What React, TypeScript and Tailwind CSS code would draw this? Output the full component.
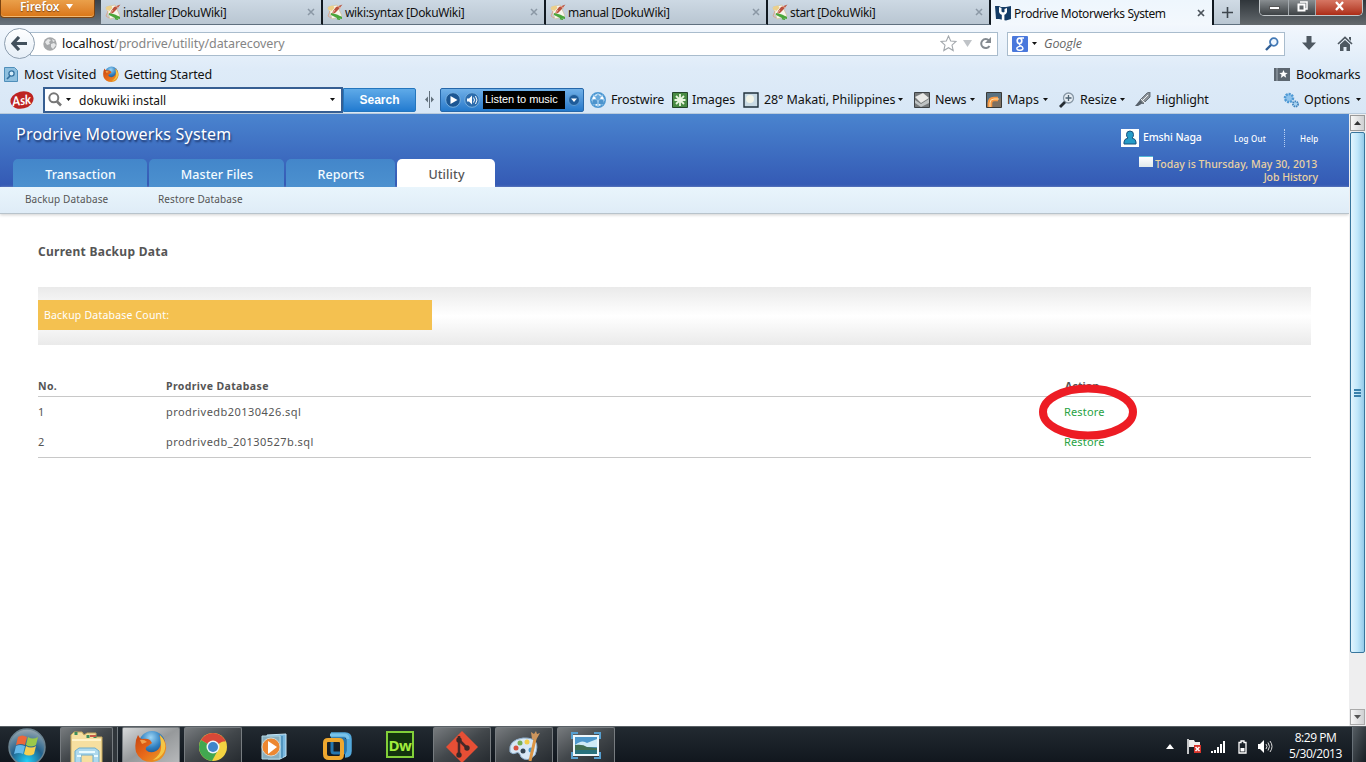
import React from "react";

const ui = "font-['Noto_Sans','Open_Sans',sans-serif]";

type TextProps = { children: React.ReactNode; className?: string };

function Label({ children, className = "" }: TextProps) {
  return <span className={`block shrink-0 whitespace-nowrap ${className}`}>{children}</span>;
}

function Caret({ className = "" }: { className?: string }) {
  return (
    <svg className={`block shrink-0 ${className}`} width="5" height="3" viewBox="0 0 5 3">
      <path d="M0 0h5L2.5 3z" fill="#111" />
    </svg>
  );
}

function WikiIcon() {
  return (
    <svg width="16" height="16" viewBox="0 0 16 16" className="block shrink-0">
      <path d="M1 3l9-2 5 11-10 3z" fill="#f8f6ec" stroke="#cfc29a" strokeWidth=".7" />
      <path d="M.5 5q2-4 6-3l1 2-3 3z" fill="#ecd08a" />
      <path d="M15.500 .5L9 3 6 7l-1 3 3-1 3-3z" fill="#b9503c" />
      <path d="M10 2l4 2M8 6L5 10" stroke="#e9b29c" strokeWidth="1" />
      <path d="M4 9l6 1.500 5 2.500v2l-5-1-6-3z" fill="#4aa73b" />
      <path d="M10 14.500l3 1" stroke="#4aa73b" strokeWidth="1.500" />
      <path d="M3 7l-2 5 3 2" fill="none" stroke="#d9a993" strokeWidth="1" />
    </svg>
  );
}

function BrowserTab({ title, wide, titleClass }: { title: string; wide?: boolean; titleClass: string }) {
  return (
    <div
      className={`flex h-[25px] shrink-0 items-center border-r-2 border-b border-r-[#101820] border-b-[#5f707f] bg-gradient-to-b from-[#cdd9e4] to-[#b9c6d2] pl-[4px] ${wide ? "w-[223px]" : "w-[222px]"}`}
    >
      <WikiIcon />
      <Label className={`ml-[2px] flex-1 pt-[2px] text-[12px] text-[#111] ${titleClass}`}>{title}</Label>
      <svg width="8" height="8" viewBox="0 0 8 8" className="mr-[6px] block">
        <path d="M1 1l6 6M7 1L1 7" stroke="#8b98a5" strokeWidth="1.5" />
      </svg>
    </div>
  );
}

function TabStrip() {
  return (
    <div className="flex h-[25px] w-full items-start overflow-hidden bg-gradient-to-b from-[#39424a] to-[#69737c]">
      <div className="mr-[6px] flex h-[18px] w-[95px] items-start rounded-b-[4px] border-x border-b border-[#7b4310] bg-gradient-to-b from-[#eaa04a] to-[#d97513] pl-[19px] shadow-[inset_0_-1px_0_#f1b873]">
        <Label className="w-[46px] text-[12px] leading-[14px] font-semibold tracking-[-0.1px] text-white [text-shadow:0_1px_1px_#7b4310]">Firefox</Label>
        <svg width="7" height="5" viewBox="0 0 7 5" className="mt-[4px] block">
          <path d="M0 0h7L3.5 5z" fill="#fff" />
        </svg>
      </div>
      <BrowserTab title="installer [DokuWiki]" titleClass="tracking-[-0.33px]" />
      <BrowserTab title="wiki:syntax [DokuWiki]" titleClass="tracking-[-0.33px]" wide />
      <BrowserTab title="manual [DokuWiki]" titleClass="tracking-[-0.33px]" />
      <BrowserTab title="start [DokuWiki]" titleClass="tracking-[-0.33px]" wide />
      <div className="flex h-[25px] w-[223px] shrink-0 items-center border-r-2 border-[#101820] bg-gradient-to-b from-[#eef6fd] to-[#f3f8fd] pl-[4px]">
        <svg width="16" height="16" viewBox="0 0 16 16" className="block">
          <path d="M0 1h4l2 1h5l5-1v13l-5 1.500L4 14H1z" fill="#143c66" />
          <path d="M4 2v5q1 3 4 3t4-3V3l-2.500 1v3L8 7.500 6.500 6.500V3z" fill="#fff" />
          <path d="M6.800 9h2.600v6.500H6.800z" fill="#fff" />
        </svg>
        <Label className="ml-[3px] flex-1 pt-[2px] text-[12px] tracking-[-0.42px] text-[#111]">Prodrive Motorwerks System</Label>
        <svg width="8" height="8" viewBox="0 0 8 8" className="mr-[7px] block">
          <path d="M1 1l6 6M7 1L1 7" stroke="#4b535b" strokeWidth="1.700" />
        </svg>
      </div>
      <div className="flex h-[25px] w-[26px] shrink-0 items-center justify-center border-b border-[#5f707f] bg-gradient-to-b from-[#d0dbe5] to-[#b9c6d2]">
        <svg width="11" height="11" viewBox="0 0 11 11" className="block">
          <path d="M5.500 0v11M0 5.500h11" stroke="#3d464e" strokeWidth="1.600" />
        </svg>
      </div>
      <div className="flex h-[25px] flex-1 items-start bg-gradient-to-b from-[#30363b] to-[#646a6e] pl-[19px]">
        <div className="flex h-[16px] w-[104px] overflow-hidden rounded-b-[5px] border-x border-b border-[#c2c7ca]">
          <div className="flex w-[29px] justify-center border-r border-[#a4aaae] bg-gradient-to-b from-[#898e91] to-[#3d4245] pt-[6px]">
            <div className="h-[4px] w-[11px] border border-[#555] bg-white" />
          </div>
          <div className="flex w-[27px] justify-center border-r border-[#a4aaae] bg-gradient-to-b from-[#898e91] to-[#3d4245] pt-px">
            <svg width="11" height="11" viewBox="0 0 11 11" className="block">
              <path d="M3 1h7v7H8" fill="none" stroke="#fff" strokeWidth="1.500" />
              <path d="M1.500 3.500h6v6h-6z" fill="none" stroke="#fff" strokeWidth="2" />
            </svg>
          </div>
          <div className="flex flex-1 justify-center bg-gradient-to-b from-[#d67663] to-[#ac2b15] pt-px">
            <svg width="11" height="10" viewBox="0 0 11 10" className="block">
              <path d="M2 1l7 8M9 1L2 9" stroke="#fff" strokeWidth="2.300" />
            </svg>
          </div>
        </div>
      </div>
    </div>
  );
}

function AddressRow() {
  return (
    <div className="flex h-[37px] items-center pl-[4px]">
      <div className="relative z-10 flex h-[31px] w-[31px] shrink-0 items-center justify-center rounded-full border border-[#8d9eaf] bg-gradient-to-b from-white to-[#e5eef7]">
        <svg width="17" height="15" viewBox="0 0 17 15" className="block">
          <path d="M8 1L2 7.500 8 14M2.500 7.500H16" fill="none" stroke="#42505c" strokeWidth="3.200" />
        </svg>
      </div>
      <div className="-ml-[5px] flex h-[24px] w-[968px] shrink-0 items-center border border-[#a9bccd] bg-white pl-[12px]">
        <svg width="14" height="14" viewBox="0 0 14 14" className="block">
          <circle cx="7" cy="7" r="6.700" fill="#a5a7a9" />
          <path d="M2 5l3-3 3 1-2 2 1 2-3 1zM8 7l3-1 2 2-3 4-2-2zM9 2l3 2-2 1z" fill="#e6e7e8" />
        </svg>
        <Label className="ml-[5px] w-[878px] pt-[2px] text-[12.500px] tracking-[-0.08px] text-[#111]">
          localhost<span className="text-[#858585]">/prodrive/utility/datarecovery</span>
        </Label>
        <svg width="17" height="17" viewBox="0 0 17 17" className="block shrink-0">
          <path d="M8.500 1l2.200 5 5.300.5-4 3.700 1.200 5.300-4.700-2.800-4.700 2.800L5 10.200 1 6.500 6.300 6z" fill="#fff" stroke="#a3a8ad" strokeWidth="1.100" />
        </svg>
        <svg width="9" height="7" viewBox="0 0 9 7" className="ml-[6px] block shrink-0">
          <path d="M0 0h9L4.500 7z" fill="#bfc3c7" />
        </svg>
        <svg width="13" height="13" viewBox="0 0 13 13" className="ml-[7px] block shrink-0">
          <path d="M10.500 9A4.500 4.500 0 1 1 10 3.500" fill="none" stroke="#848a90" strokeWidth="2" />
          <path d="M12 0v6H6z" fill="#848a90" />
        </svg>
      </div>
      <div className="ml-[9px] flex h-[24px] w-[278px] shrink-0 items-center border border-[#a9bccd] bg-white pl-[4px]">
        <div className="flex h-[16px] w-[16px] items-center justify-center overflow-hidden rounded-[1px] bg-[#4a78dc]">
          <svg width="12" height="16" viewBox="0 0 12 16" className="block">
            <ellipse cx="5.500" cy="4.800" rx="2.300" ry="2.700" fill="none" stroke="#fff" strokeWidth="1.700" />
            <path d="M6.500 2h3.500M6 7.500q-1.500 1.200.5 2.200 3 1.300 2.300 3.300-1 1.500-3.500 1.200-3-.4-2.300-2.400.8-1.500 3.700-1.700" fill="none" stroke="#fff" strokeWidth="1.400" />
          </svg>
        </div>
        <Caret className="ml-[4px]" />
        <Label className="ml-[7px] w-[221px] pt-[2px] font-['Open_Sans',sans-serif] text-[12.500px] tracking-[-0.1px] text-[#666] italic">Google</Label>
        <svg width="14" height="14" viewBox="0 0 14 14" className="block shrink-0">
          <circle cx="8.800" cy="5" r="3.800" fill="#eef6ff" stroke="#4379b5" strokeWidth="1.800" />
          <path d="M6 8L1 13" stroke="#315f96" strokeWidth="2.400" />
        </svg>
      </div>
      <svg width="14" height="15" viewBox="0 0 14 15" className="ml-[17px] block shrink-0">
        <path d="M4.500 0h5v6.500H14L7 14 0 6.500h4.500z" fill="#4e5861" />
      </svg>
      <svg width="16" height="15" viewBox="0 0 16 15" className="ml-[21px] block shrink-0">
        <path d="M1 8l7-6.500L15 8" fill="none" stroke="#4e5861" strokeWidth="1.700" />
        <path d="M12 1h2v4l-2-2zM3 8.500L8 4l5 4.500V15H9.500v-4h-3v4H3z" fill="#4e5861" />
      </svg>
    </div>
  );
}

function FirefoxIcon({ size }: { size: number }) {
  return (
    <svg width={size} height={size} viewBox="0 0 32 32" className="block shrink-0">
      <defs>
        <radialGradient id="ffGlobe" cx=".45" cy=".25" r=".8">
          <stop offset="0" stopColor="#9cd5f5" />
          <stop offset=".5" stopColor="#2f7fc0" />
          <stop offset="1" stopColor="#133568" />
        </radialGradient>
        <linearGradient id="ffFox" x1="0" y1="0" x2="1" y2="1">
          <stop offset="0" stopColor="#c4440f" />
          <stop offset=".5" stopColor="#e8691a" />
          <stop offset="1" stopColor="#e9a526" />
        </linearGradient>
      </defs>
      <circle cx="17" cy="14" r="13" fill="url(#ffGlobe)" />
      <path d="M3 5q1 3 4 4 5-1 8 1l2 3-4 3q-3 1-2 4 4 4 10 1 4-2 5-8 1-3-2-8 8 5 7 14-2 12-14 13Q5 32 1 22-1 12 3 5z" fill="url(#ffFox)" />
      <path d="M25 5q8 8 4 17-4 7-11 8 9-6 8-14z" fill="#f5c544" />
      <path d="M5 10q4-1 7 2l-5 2z" fill="#f2a04c" />
    </svg>
  );
}

function BookmarksRow() {
  return (
    <div className="flex h-[24px] items-center pl-[4px]">
      <svg width="14" height="15" viewBox="0 0 14 15" className="block shrink-0">
        <path d="M.5 .5h10l3 3v11H.5z" fill="#8fc0df" stroke="#4f8fba" />
        <circle cx="7.500" cy="6.500" r="2.600" fill="#d5edfb" stroke="#34719f" strokeWidth="1.300" />
        <path d="M6 9l-3 3" stroke="#34719f" strokeWidth="1.700" />
      </svg>
      <Label className="ml-[6px] w-[79px] pt-[2px] text-[12.500px] tracking-[0.05px] text-[#111]">Most Visited</Label>
      <FirefoxIcon size={16} />
      <Label className="ml-[5px] flex-1 pt-[2px] text-[12.500px] tracking-[-0.12px] text-[#111]">Getting Started</Label>
      <svg width="16" height="14" viewBox="0 0 16 14" className="block shrink-0">
        <path d="M0 1h16v13H0z" fill="#5c6670" />
        <path d="M3 1v13" stroke="#9fa9b2" />
        <path d="M9.500 3l1.200 2.700 3 .2-2.300 1.900.8 3-2.700-1.700L6.800 11l.8-3.200L5.300 5.900l3-.2z" fill="#fff" />
      </svg>
      <Label className="ml-[6px] w-[70px] pt-[2px] text-[12.500px] tracking-[-0.25px] text-[#111]">Bookmarks</Label>
    </div>
  );
}

function AskRow() {
  return (
    <div className="flex h-[27px] items-center pl-[10px] text-[12.500px] text-[#111]">
      <svg width="24" height="20" viewBox="0 0 24 20" className="block shrink-0">
        <ellipse cx="12" cy="10" rx="11.700" ry="8.600" fill="#bd2322" transform="rotate(-14 12 10)" />
        <text x="2" y="15" fontSize="13" fontStyle="italic" fontWeight="bold" fill="#fff" fontFamily="Lato" textLength="19" lengthAdjust="spacingAndGlyphs" transform="rotate(-8 12 10)">Ask</text>
      </svg>
      <div className="ml-[9px] flex h-[26px] w-[300px] shrink-0 items-center border-2 border-[#365e92] bg-white pl-[3px]">
        <svg width="14" height="15" viewBox="0 0 14 15" className="block shrink-0">
          <circle cx="5.800" cy="5.800" r="4.500" fill="none" stroke="#777" strokeWidth="2" />
          <path d="M9 9.500l4 4" stroke="#777" strokeWidth="2.600" />
        </svg>
        <Caret className="ml-[4px]" />
        <Label className="ml-[8px] w-[251px] pt-[2px] text-[12px]">dokuwiki install</Label>
        <Caret />
      </div>
      <div className="flex h-[24px] w-[73px] shrink-0 items-center justify-center rounded-r-[2px] border border-[#2476bd] bg-gradient-to-b from-[#5eaae8] to-[#217bd0]">
        <Label className="font-['Liberation_Sans',sans-serif] text-[12px] font-bold text-white">Search</Label>
      </div>
      <svg width="9" height="17" viewBox="0 0 9 17" className="ml-[9px] block shrink-0">
        <path d="M4.500 0v17" stroke="#63717d" />
        <path d="M3 5.500v6L0 8.500zM6 5.500v6l3-3z" fill="#63717d" />
      </svg>
      <div className="ml-[6px] flex h-[24px] w-[144px] shrink-0 items-center rounded-[2px] border border-[#2667a9] bg-gradient-to-b from-[#70b0e8] to-[#2378ca] pl-[4px]">
        <svg width="35" height="16" viewBox="0 0 35 16" className="block shrink-0">
          <circle cx="8" cy="8" r="7.300" fill="#1c5693" stroke="#76b0e0" />
          <circle cx="27" cy="8" r="7.300" fill="#2c6cad" stroke="#76b0e0" />
          <path d="M5.500 4l7 4-7 4zM22 6.500h2l3-3v9l-3-3h-2z" fill="#fff" />
          <path d="M28.500 5.500q2 2.500 0 5M30.500 4q3 4 0 8" fill="none" stroke="#fff" />
        </svg>
        <div className="ml-[3px] flex h-[18px] w-[82px] items-center bg-black pl-[2px]">
          <Label className="font-['Liberation_Sans',sans-serif] text-[11px] tracking-[-0.05px] text-white">Listen to music</Label>
        </div>
        <svg width="12" height="12" viewBox="0 0 12 12" className="ml-[3px] block shrink-0">
          <circle cx="6" cy="6" r="5.500" fill="#1e5c9a" stroke="#5c9bd2" />
          <path d="M3 4.500h6L6 8z" fill="#fff" />
        </svg>
      </div>
      <svg width="16" height="16" viewBox="0 0 16 16" className="ml-[6px] block shrink-0">
        <circle cx="8" cy="8" r="7" fill="#fff" stroke="#4e98d2" strokeWidth="2" />
        <path d="M8 1v14M1 8h14M3 3q5 4 10 0M3 13q5-4 10 0" fill="none" stroke="#86bee9" strokeWidth="1.500" />
        <circle cx="8" cy="5.500" r="2.500" fill="#68a9dc" />
        <circle cx="4.800" cy="10" r="2.500" fill="#4d94cd" />
        <circle cx="11.200" cy="10" r="2.500" fill="#4d94cd" />
      </svg>
      <Label className="ml-[5px] w-[61px] pt-[2px] tracking-[-0.15px]">Frostwire</Label>
      <svg width="16" height="16" viewBox="0 0 16 16" className="block shrink-0">
        <path d="M.5 .5h15v15H.5z" fill="#498b43" stroke="#24452a" />
        <path d="M8 2v12M2.500 8h11M4 4l8 8M12 4l-8 8" stroke="#e9f5df" strokeWidth="1.800" />
      </svg>
      <Label className="ml-[4px] w-[51px] pt-[2px] tracking-[-0.1px]">Images</Label>
      <svg width="16" height="16" viewBox="0 0 16 16" className="block shrink-0">
        <path d="M1 1h14v14H1z" fill="#c9dae4" stroke="#20303b" strokeWidth="1.400" />
        <circle cx="7" cy="7" r="4" fill="#f2f4e8" />
      </svg>
      <Label className="ml-[5px] w-[134px] pt-[2px] tracking-[-0.1px]">28° Makati, Philippines</Label>
      <Caret />
      <svg width="16" height="16" viewBox="0 0 16 16" className="ml-[11px] block shrink-0">
        <path d="M.5 .5h15v15H.5z" fill="#777a7b" stroke="#3e4245" />
        <path d="M1 5l8-4 6 5-8 5z" fill="#e9e9e7" />
        <path d="M1 8l6 4 8-5v4l-8 4-6-4z" fill="#bfc3c4" />
      </svg>
      <Label className="ml-[5px] w-[35px] pt-[2px] tracking-[-0.2px]">News</Label>
      <Caret />
      <svg width="16" height="16" viewBox="0 0 16 16" className="ml-[11px] block shrink-0">
        <path d="M.5 .5h15v15H.5z" fill="#7d7062" stroke="#3a3936" />
        <path d="M1 1h14v5L1 10z" fill="#597181" />
        <path d="M4 15v-4q0-4 4-4h4" fill="none" stroke="#f69743" strokeWidth="4.500" />
        <path d="M4 15v-4q0-4 4-4h5" fill="none" stroke="#ffe1a9" />
      </svg>
      <Label className="ml-[5px] w-[36px] pt-[2px]">Maps</Label>
      <Caret />
      <svg width="16" height="16" viewBox="0 0 16 16" className="ml-[11px] block shrink-0">
        <circle cx="9.500" cy="6" r="5" fill="#e6edf4" stroke="#8797a5" strokeWidth="1.300" />
        <path d="M9.500 3v6M6.500 6h6" stroke="#4d6271" strokeWidth="1.300" />
        <path d="M6 10l-5 5" stroke="#252c32" strokeWidth="2.800" />
      </svg>
      <Label className="ml-[5px] w-[40px] pt-[2px] tracking-[-0.05px]">Resize</Label>
      <Caret />
      <svg width="16" height="16" viewBox="0 0 16 16" className="ml-[10px] block shrink-0">
        <path d="M0 14l5-6 3 3-5 3z" fill="#56606a" />
        <path d="M5 8l7-7 3-1v5l-7 7z" fill="#8c9399" stroke="#525c64" strokeWidth=".8" />
        <path d="M6 7l4 4M8 8l5-5" stroke="#eceff1" />
      </svg>
      <Label className="ml-[5px] flex-1 pt-[2px] tracking-[-0.2px]">Highlight</Label>
      <svg width="17" height="16" viewBox="0 0 17 16" className="block shrink-0">
        <circle cx="6" cy="6" r="4" fill="#8fc3ec" stroke="#4f99d4" strokeWidth="2.500" strokeDasharray="2 1" />
        <circle cx="12.500" cy="12" r="2.600" fill="#a9d2f0" stroke="#4284bd" strokeWidth="1.800" strokeDasharray="1.500 .7" />
      </svg>
      <Label className="ml-[4px] w-[52px] pt-[2px] tracking-[-0.1px]">Options</Label>
      <Caret className="mr-[5px]" />
    </div>
  );
}

function AppTab({ title, className }: { title: string; className: string }) {
  return (
    <div className={`flex h-[28px] items-center justify-center rounded-t-[5px] pt-[4px] pl-px text-[12.500px] ${className}`}>
      <Label>{title}</Label>
    </div>
  );
}

function AppHeader() {
  return (
    <header className="flex h-[73px] bg-gradient-to-b from-[#4a84cf] to-[#3459b4]">
      <div className="flex flex-1 flex-col justify-between">
        <Label className="mt-[8px] ml-[16px] text-[16px] leading-[24px] tracking-[0.22px] text-white [text-shadow:1px_2px_2px_#1c3469]">Prodrive Motowerks System</Label>
        <div className="flex gap-[2px] pl-[13px] font-medium text-[#f4fbff]">
          <AppTab title="Transaction" className="w-[134px] bg-gradient-to-b from-[#4386ca] to-[#4c91cf] tracking-[0.12px]" />
          <AppTab title="Master Files" className="w-[135px] bg-gradient-to-b from-[#4386ca] to-[#4c91cf] tracking-[0.05px]" />
          <AppTab title="Reports" className="w-[109px] bg-gradient-to-b from-[#4386ca] to-[#4c91cf] tracking-[0.05px]" />
          <AppTab title="Utility" className="w-[98px] bg-white text-[#555] tracking-[0.1px]" />
        </div>
      </div>
      <div className="w-[229px] pt-[14px]">
        <div className="flex h-[20px] items-center text-white">
          <svg width="18" height="18" viewBox="0 0 18 18" className="ml-px block shrink-0">
            <path d="M0 0h18v18H0z" fill="#fff" />
            <path d="M5.500 5.500a3.500 3.500 0 0 1 7 0Q12.500 8 11 9q4 1 4 4v2H3v-2q0-3 4-4-1.500-1-1.500-3.500z" fill="#259bc8" stroke="#17517d" />
          </svg>
          <Label className="ml-[4px] w-[91px] text-[10.500px] font-medium tracking-[-0.1px]">Emshi Naga</Label>
          <Label className="w-[50px] pt-px text-[8px] font-medium tracking-[0.2px]">Log Out</Label>
          <div className="h-[18px] w-[16px] border-l border-dotted border-[#b7cef2]" />
          <Label className="pt-px text-[8px] font-medium tracking-[0.2px]">Help</Label>
        </div>
        <div className="mt-[9px] flex h-[14px] items-center pl-[19px]">
          <div className="mb-[5px] h-[11px] w-[14px] border-t border-[#54b8d7] bg-gradient-to-b from-white to-[#dfe9eb]" />
          <Label className="ml-[2px] pt-px text-[10.500px] font-medium tracking-[0.06px] text-[#ead2a2]">Today is Thursday, May 30, 2013</Label>
        </div>
        <Label className="mr-[31px] text-right text-[10.500px] leading-[13px] font-medium tracking-[-0.05px] text-[#ead2a2]">Job History</Label>
      </div>
    </header>
  );
}

function BackupTable() {
  const rows = ["prodrivedb20130426.sql", "prodrivedb_20130527b.sql"];
  return (
    <div className="relative mt-[30px] w-[1273px] border-b border-[#c8c8c8] text-[11px] text-[#555]">
      <div className="grid h-[22px] grid-cols-[128px_898px_1fr] items-center border-b border-[#c8c8c8] pt-[2px] text-[10.500px] font-bold tracking-[0.38px]">
        <Label>No.</Label>
        <Label>Prodrive Database</Label>
        <Label className="pl-px tracking-[0.1px]">Action</Label>
      </div>
      {rows.map((name, i) => (
        <div key={name} className="grid h-[30px] grid-cols-[128px_898px_1fr] items-center pt-px tracking-[0.45px]">
          <Label>{i + 1}</Label>
          <Label>{name}</Label>
          <Label className="tracking-[0.15px] text-[#27a243]">Restore</Label>
        </div>
      ))}
      <svg width="100" height="56" viewBox="0 0 100 56" className="absolute top-[9px] left-[1000px] block">
        <ellipse cx="50" cy="28" rx="45" ry="23.500" fill="none" stroke="#ed1c24" strokeWidth="8" />
      </svg>
    </div>
  );
}

function PageScrollbar() {
  return (
    <div className="flex h-full w-[17px] flex-col items-center bg-[#eeeeef] pt-px pb-px">
      <div className="flex h-[16px] w-[15px] items-center justify-center border border-[#999] bg-gradient-to-r from-[#f7f7f7] to-[#cfd0d2]">
        <svg width="7" height="4" viewBox="0 0 7 4"><path d="M0 4h7L3.500 0z" fill="#333" /></svg>
      </div>
      <div className="mt-px flex h-[521px] w-[15px] items-center justify-center rounded-[2px] border border-[#38769d] bg-gradient-to-r from-[#e2f5fe] via-[#c1e7fa] to-[#94cbe9]">
        <div className="flex flex-col gap-px">
          <div className="h-[2px] w-[7px] bg-[#3a81ac]" />
          <div className="h-[2px] w-[7px] bg-[#3a81ac]" />
          <div className="h-[2px] w-[7px] bg-[#3a81ac]" />
        </div>
      </div>
      <div className="flex-1" />
      <div className="flex h-[16px] w-[15px] items-center justify-center border border-[#aaa] bg-gradient-to-r from-[#f7f7f7] to-[#cfd0d2]">
        <svg width="7" height="4" viewBox="0 0 7 4"><path d="M0 0h7L3.500 4z" fill="#555" /></svg>
      </div>
    </div>
  );
}

function TaskButton({ children, className = "" }: TextProps) {
  return (
    <div className={`flex h-[36px] shrink-0 items-start justify-center rounded-t-[2px] border border-b-0 border-[#777c80] ${className}`}>{children}</div>
  );
}

function Taskbar() {
  const dark = "bg-gradient-to-br from-[#777b7e] via-[#42474b] to-[#252a2f]";
  return (
    <div className="flex h-[36px] items-start overflow-hidden border-t border-[#596065] bg-gradient-to-b from-[#222a31] to-[#11171e]">
      <svg width="40" height="35" viewBox="0 0 40 35" className="ml-[7px] block shrink-0">
        <defs>
          <radialGradient id="orb" cx=".5" cy=".9" r=".9">
            <stop offset="0" stopColor="#20d1f8" />
            <stop offset=".5" stopColor="#23618c" />
            <stop offset="1" stopColor="#9ba9b1" />
          </radialGradient>
        </defs>
        <circle cx="20" cy="20" r="18" fill="url(#orb)" stroke="#6c8491" strokeWidth="1.500" />
        <path d="M11 10q4-3 9 0l-2 8q-4-2-9 0z" fill="#ec6739" />
        <path d="M21 10q5 3 10 0l-2 8q-5 3-10 0z" fill="#9bc94a" />
        <path d="M9 19q4-2 9 0l-2 8q-4-2-9 0z" fill="#65b9ea" />
        <path d="M19 19q5 3 10 0l-2 8q-5 3-10 0z" fill="#f7cf51" />
      </svg>
      <TaskButton className={`ml-[13px] w-[53px] ${dark}`}>
        <svg width="34" height="35" viewBox="0 0 34 35" className="block">
          <path d="M1 7l3-3h8l2 3 3-2h9v4h6v26H1z" fill="#f6dfa0" stroke="#c4a65c" />
          <path d="M2 12h29" stroke="#fff3ca" strokeWidth="2" />
          <path d="M6 4v3M18 7v3M25 7v3" stroke="#3d8d5b" strokeWidth="3" />
          <path d="M20 8h6" stroke="#c95846" strokeWidth="2" />
          <path d="M5 35V23l4-3h16l4 3v12h-6v-8H11v8z" fill="#add9ed" stroke="#6daccc" />
          <path d="M9 24h16M7 28h4M24 28h4" stroke="#e9fbff" strokeWidth="2" />
        </svg>
      </TaskButton>
      <div className="h-[36px] w-[5px] border-r border-[#737a7f] bg-[#30363b]" />
      <TaskButton className="ml-[4px] w-[58px] bg-gradient-to-br from-[#d7d9da] via-[#96999b] to-[#b7b9bb] pt-[2px]">
        <FirefoxIcon size={32} />
      </TaskButton>
      <TaskButton className={`ml-[4px] w-[58px] pt-[4px] ${dark}`}>
        <svg width="30" height="30" viewBox="0 0 30 30" className="block">
          <circle cx="15" cy="15" r="14" fill="#f3d341" />
          <path d="M15 15L2.900 8A14 14 0 0 1 27.100 8z" fill="#d94838" />
          <path d="M15 15L2.900 8A14 14 0 0 0 14 29l6-11z" fill="#42a750" />
          <path d="M15 8.500h12.300" stroke="#d94838" strokeWidth="2" />
          <circle cx="15" cy="15" r="6.500" fill="#eef6fb" />
          <circle cx="15" cy="15" r="5" fill="#3f85cb" />
        </svg>
      </TaskButton>
      <svg width="28" height="28" viewBox="0 0 28 28" className="mt-[6px] ml-[18px] block shrink-0">
        <path d="M7 2l19-1v22l-6 3H8z" fill="#79b8df" stroke="#c7e6f6" />
        <path d="M22 3v22" stroke="#31759f" />
        <path d="M2 3h18v23H2z" fill="#88aebe" stroke="#b4d8e4" />
        <circle cx="11" cy="14" r="9" fill="#ed8730" stroke="#d5d8d1" />
        <path d="M8 8l9 6-9 7z" fill="#fff" />
      </svg>
      <svg width="30" height="30" viewBox="0 0 30 30" className="mt-[4px] ml-[34px] block shrink-0">
        <path d="M9 4h14q4 0 4 4v12q0 4-4 4" fill="none" stroke="#53a9dc" strokeWidth="5.500" strokeLinejoin="round" />
        <rect x="10" y="8" width="13" height="14" rx="2" fill="none" stroke="#2676ad" strokeWidth="3" />
        <path d="M6 9h11q3 0 3 3v11q0 4-3 4H7q-4 0-4-4V12q0-3 3-3z" fill="none" stroke="#efa82f" strokeWidth="4" />
        <path d="M8 4h14q4 0 4 4" fill="none" stroke="#79c3ea" strokeWidth="3" />
      </svg>
      <div className="mt-[4px] ml-[34px] flex h-[27px] w-[28px] shrink-0 items-center justify-center border-2 border-[#82cf39] bg-[#13330e]">
        <Label className="font-['Open_Sans',sans-serif] text-[15px] leading-[20px] tracking-[-0.5px] font-bold text-[#a2ec3c]">Dw</Label>
      </div>
      <TaskButton className={`ml-[19px] w-[58px] pt-[2px] ${dark}`}>
        <svg width="34" height="34" viewBox="0 0 34 34" className="block">
          <path d="M17 1l16 16-16 16L1 17z" fill="#e64f35" />
          <path d="M14 6v20M14 10l8 8" stroke="#4a2929" strokeWidth="2.500" />
          <circle cx="14" cy="10" r="2.700" fill="#3c2928" />
          <circle cx="14" cy="25" r="2.700" fill="#3c2928" />
          <circle cx="22" cy="18" r="2.700" fill="#3c2928" />
        </svg>
      </TaskButton>
      <TaskButton className={`ml-[4px] w-[58px] pt-[2px] ${dark}`}>
        <svg width="32" height="32" viewBox="0 0 32 32" className="block">
          <path d="M15 8Q0 10 2 22q3 3 6 1 3-2 5 4 6 6 14-2Q34 7 15 8z" fill="#d8e8f5" stroke="#8eaecc" />
          <circle cx="8" cy="18" r="2.500" fill="#d75240" />
          <circle cx="12" cy="13" r="2.500" fill="#77ae54" />
          <circle cx="19" cy="12" r="2.500" fill="#f1cd48" />
          <circle cx="23" cy="20" r="2.500" fill="#489bd0" />
          <circle cx="15" cy="21" r="2.500" fill="#354552" />
          <path d="M27 9L22 31" stroke="#dc9544" strokeWidth="3" />
          <path d="M24 9l-1-7 3 2 2-3 1 3 3-1-4 7z" fill="#cd955d" />
        </svg>
      </TaskButton>
      <TaskButton className={`ml-[4px] w-[58px] pt-[4px] ${dark}`}>
        <svg width="30" height="27" viewBox="0 0 30 27" className="block">
          <path d="M1 7V1h6M23 1h6v6M29 20v6h-6M7 26H1v-6" fill="none" stroke="#569fd0" strokeWidth="2" />
          <path d="M3 4h24v19H3z" fill="#4c97cb" stroke="#edf6fa" strokeWidth="2" />
          <path d="M4 13q7-6 12-2l10-4v8H4z" fill="#ceeaf5" />
          <path d="M4 13q8-1 12 2l10 1v2H4z" fill="#416e51" />
          <path d="M4 18h22v4H4z" fill="#27717d" />
        </svg>
      </TaskButton>
      <div className="flex h-[36px] flex-1 items-center justify-end pt-[3px] text-white">
        <svg width="8" height="5" viewBox="0 0 8 5" className="mr-[13px] block"><path d="M0 5h8L4 0z" fill="#fff" /></svg>
        <svg width="15" height="15" viewBox="0 0 15 15" className="mr-[9px] block">
          <path d="M1 0v15" stroke="#fff" strokeWidth="1.500" />
          <path d="M2 1h5l1 2h5v7H8L7 8H2z" fill="#eee" />
          <path d="M7 6h7v8H7z" fill="#d6342b" />
          <path d="M8.500 8l4 4M12.500 8l-4 4" stroke="#fff" strokeWidth="1.500" />
        </svg>
        <svg width="15" height="12" viewBox="0 0 15 12" className="mr-[12px] block">
          <path d="M0 10h2v2H0zM3 9h2v3H3zM6 6h2v6H6zM9 3h2v9H9zM12 0h2v12h-2z" fill="#fff" />
        </svg>
        <svg width="9" height="14" viewBox="0 0 9 14" className="mr-[11px] block">
          <path d="M3 1h3v1.500h2v10.500H1V2.500h2z" fill="none" stroke="#fff" strokeWidth="1.300" />
          <path d="M2.500 8h4v3.500h-4z" fill="#fff" />
        </svg>
        <svg width="15" height="15" viewBox="0 0 15 15" className="mr-[14px] block">
          <path d="M0 5h2l4-4v13l-4-4H0z" fill="#fff" />
          <path d="M8 5q2 2.500 0 5M10 3.500q3 4 0 8M12 2q4 5.500 0 11" fill="none" stroke="#ddd" />
        </svg>
        <div className="mr-[8px] -mt-px w-[57px] text-center font-['Open_Sans',sans-serif] text-[12px] leading-[16px] tracking-[-0.45px]">
          <Label>8:29 PM</Label>
          <Label>5/30/2013</Label>
        </div>
      </div>
      <div className="h-[36px] w-[14px] border-l border-[#677077] bg-gradient-to-br from-[#555d63] to-[#171d22]" />
    </div>
  );
}

export default function App() {
  return (
    <div className={`flex h-[762px] w-[1366px] flex-col overflow-hidden bg-white ${ui}`}>
      <TabStrip />
      <div className="h-[89px] shrink-0 border-b border-[#b9cbdc] bg-gradient-to-b from-[#f2f7fd] via-[#deebf8] to-[#d8e7f6]">
        <AddressRow />
        <BookmarksRow />
        <AskRow />
      </div>
      <div className="flex h-[612px] shrink-0">
        <div className="w-[1349px]">
          <AppHeader />
          <nav className="flex h-[27px] items-center border-b border-[#b8c3cb] bg-gradient-to-b from-[#e9f5fc] to-[#dfecf7] pb-[2px] pl-[25px] text-[10px] text-[#555] shadow-[0_1px_3px_#d0d0d0]">
            <Label className="w-[133px] tracking-[0.12px]">Backup Database</Label>
            <Label className="tracking-[0.12px]">Restore Database</Label>
          </nav>
          <main className="pt-[28px] pl-[38px]">
            <Label className="text-[12px] leading-[20px] font-bold tracking-[0.27px] text-[#555]">Current Backup Data</Label>
            <div className="mt-[25px] flex h-[58px] w-[1273px] items-start bg-gradient-to-b from-[#eaeaea] via-white to-[#eaeaea] pt-[13px]">
              <div className="flex h-[30px] w-[394px] items-center bg-[#f4c150] pt-px pl-[6px] text-[10.500px] tracking-[0.2px] text-white">
                <Label>Backup Database Count:</Label>
              </div>
            </div>
            <BackupTable />
          </main>
        </div>
        <PageScrollbar />
      </div>
      <Taskbar />
    </div>
  );
}
